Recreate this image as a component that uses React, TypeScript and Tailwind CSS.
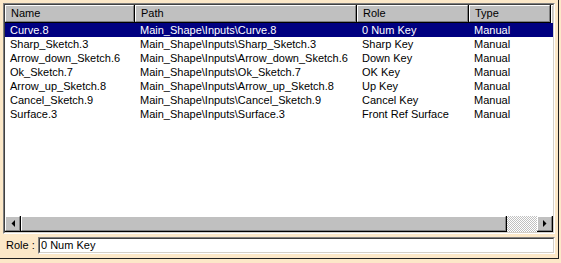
const rows = [
  ["Curve.8", "Main_Shape\\Inputs\\Curve.8", "0 Num Key", "Manual"],
  ["Sharp_Sketch.3", "Main_Shape\\Inputs\\Sharp_Sketch.3", "Sharp Key", "Manual"],
  ["Arrow_down_Sketch.6", "Main_Shape\\Inputs\\Arrow_down_Sketch.6", "Down Key", "Manual"],
  ["Ok_Sketch.7", "Main_Shape\\Inputs\\Ok_Sketch.7", "OK Key", "Manual"],
  ["Arrow_up_Sketch.8", "Main_Shape\\Inputs\\Arrow_up_Sketch.8", "Up Key", "Manual"],
  ["Cancel_Sketch.9", "Main_Shape\\Inputs\\Cancel_Sketch.9", "Cancel Key", "Manual"],
  ["Surface.3", "Main_Shape\\Inputs\\Surface.3", "Front Ref Surface", "Manual"],
];

const cols = [
  { label: "Name", w: "w-[130px]" },
  { label: "Path", w: "w-[222px]" },
  { label: "Role", w: "w-[112px]" },
  { label: "Type", w: "w-[82px]" },
];

function HeaderCell({ label, w }: { label: string; w: string }) {
  return (
    <div className={`${w} h-[18px] shrink-0 border-r border-b border-black`}>
      <div className="h-full border-t border-l border-white border-r border-b border-r-[#808080] border-b-[#808080] bg-[#c0c0c0] pl-[5px] leading-[15px]">
        {label}
      </div>
    </div>
  );
}

function ArrowBtn({ dir }: { dir: "left" | "right" }) {
  return (
    <div className="w-[16px] h-[16px] shrink-0 border-r border-b border-black">
      <div className="w-full h-full border-t border-l border-white border-r border-b border-r-[#808080] border-b-[#808080] bg-[#c0c0c0] flex items-center justify-center">
        <svg width="4" height="7" viewBox="0 0 4 7">
          {dir === "left" ? <path d="M4 0V7L0.5 3.5Z" fill="#000" /> : <path d="M0 0V7L3.5 3.5Z" fill="#000" />}
        </svg>
      </div>
    </div>
  );
}

export default function App() {
  return (
    <div className="w-[561px] h-[263px] bg-[#fce8c8] text-[11px] text-black" style={{ fontFamily: '"Liberation Sans", Arial, sans-serif' }}>
      <div className="w-[559px] h-[259px] border-r border-b border-[#202020] px-[3px] pt-[3px]">
        {/* list view */}
        <div className="h-[231px] border-t border-l border-[#808080] border-r border-b border-r-white border-b-white flex flex-col">
          <div className="flex-1 border-t border-l border-[#404040] border-r border-b border-r-[#d4d0c8] border-b-[#d4d0c8] bg-white flex flex-col min-h-0">
            <div className="flex bg-[#c0c0c0]">
              {cols.map((c) => (
                <HeaderCell key={c.label} label={c.label} w={c.w} />
              ))}
              <div className="flex-1 h-[18px] border-t border-l border-white bg-[#c0c0c0]" />
            </div>
            <div className="flex-1 min-h-0">
              {rows.map((r, i) => (
                <div key={r[0]} className={`flex h-[14px] leading-[14px] ${i === 0 ? "bg-[#000080] text-white" : ""}`}>
                  {r.map((t, j) => (
                    <div key={j} className={`${cols[j].w} shrink-0 pl-[5px] whitespace-nowrap overflow-hidden`}>
                      {t}
                    </div>
                  ))}
                </div>
              ))}
            </div>
            {/* horizontal scrollbar */}
            <div className="flex h-[16px]">
              <ArrowBtn dir="left" />
              <div className="w-[486px] h-[16px] shrink-0 border-r border-b border-black">
                <div className="w-full h-full border-t border-l border-white border-r border-b border-r-[#808080] border-b-[#808080] bg-[#c0c0c0]" />
              </div>
              <div className="flex-1 h-[16px] bg-[repeating-conic-gradient(#c0c0c0_0%_25%,#ffffff_0%_50%)] bg-[length:2px_2px]" />
              <ArrowBtn dir="right" />
            </div>
          </div>
        </div>
        {/* role field */}
        <div className="flex items-center mt-[3px] h-[17px]">
          <span className="pl-[3px] w-[35px] shrink-0">Role :</span>
          <div className="flex-1 h-[17px] border-t border-l border-[#808080] border-r border-b border-r-white border-b-white">
            <div className="h-full border-t border-l border-[#404040] border-r border-b border-r-[#d4d0c8] border-b-[#d4d0c8] bg-white pl-[1px] leading-[13px]">
              0 Num Key
            </div>
          </div>
        </div>
      </div>
    </div>
  );
}
